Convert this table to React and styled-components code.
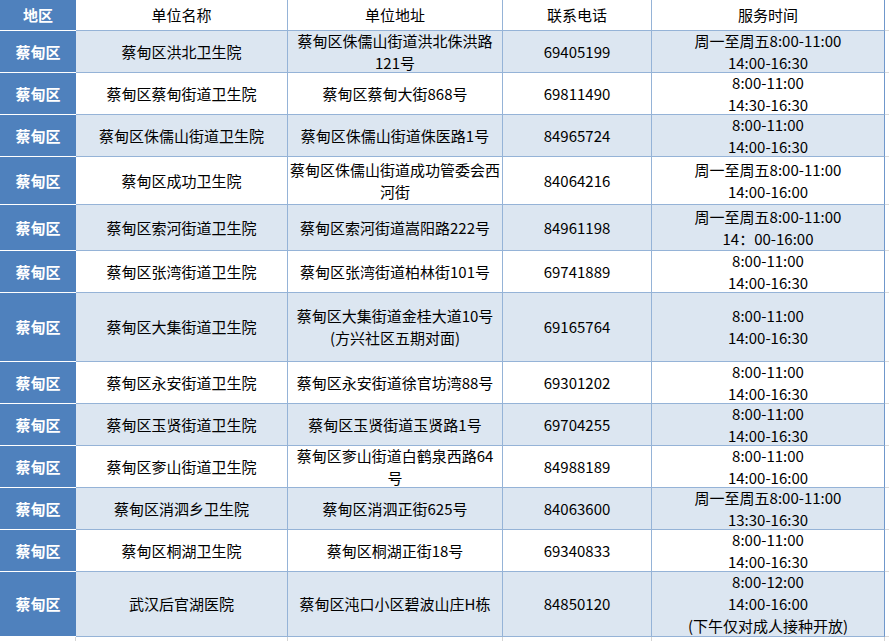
import React from 'react';
import styled, { createGlobalStyle } from 'styled-components';

const GlobalStyle = createGlobalStyle`
    html, body {
        margin: 0;
        padding: 0;
        background: #fff;
    }
    body {
        font-family: "Noto Sans CJK SC", "Noto Sans", sans-serif;
    }
`;

const columns = '76px 212px 215px 149px 233px 4px';

const rows = [
    { h: 42, name: ['蔡甸区洪北卫生院'], addr: ['蔡甸区侏儒山街道洪北侏洪路', '121号'], tel: '69405199', time: ['周一至周五8:00-11:00', '14:00-16:30'] },
    { h: 42, name: ['蔡甸区蔡甸街道卫生院'], addr: ['蔡甸区蔡甸大街868号'], tel: '69811490', time: ['8:00-11:00', '14:30-16:30'] },
    { h: 42, name: ['蔡甸区侏儒山街道卫生院'], addr: ['蔡甸区侏儒山街道侏医路1号'], tel: '84965724', time: ['8:00-11:00', '14:00-16:30'] },
    { h: 48, name: ['蔡甸区成功卫生院'], addr: ['蔡甸区侏儒山街道成功管委会西', '河街'], tel: '84064216', time: ['周一至周五8:00-11:00', '14:00-16:00'] },
    { h: 46, name: ['蔡甸区索河街道卫生院'], addr: ['蔡甸区索河街道嵩阳路222号'], tel: '84961198', time: ['周一至周五8:00-11:00', '14：00-16:00'] },
    { h: 42, name: ['蔡甸区张湾街道卫生院'], addr: ['蔡甸区张湾街道柏林街101号'], tel: '69741889', time: ['8:00-11:00', '14:00-16:30'] },
    { h: 69, name: ['蔡甸区大集街道卫生院'], addr: ['蔡甸区大集街道金桂大道10号', '(方兴社区五期对面)'], tel: '69165764', time: ['8:00-11:00', '14:00-16:30'] },
    { h: 42, name: ['蔡甸区永安街道卫生院'], addr: ['蔡甸区永安街道徐官坊湾88号'], tel: '69301202', time: ['8:00-11:00', '14:00-16:30'] },
    { h: 42, name: ['蔡甸区玉贤街道卫生院'], addr: ['蔡甸区玉贤街道玉贤路1号'], tel: '69704255', time: ['8:00-11:00', '14:00-16:30'] },
    { h: 42, name: ['蔡甸区奓山街道卫生院'], addr: ['蔡甸区奓山街道白鹤泉西路64', '号'], tel: '84988189', time: ['8:00-11:00', '14:00-16:00'] },
    { h: 42, name: ['蔡甸区消泗乡卫生院'], addr: ['蔡甸区消泗正街625号'], tel: '84063600', time: ['周一至周五8:00-11:00', '13:30-16:30'] },
    { h: 42, name: ['蔡甸区桐湖卫生院'], addr: ['蔡甸区桐湖正街18号'], tel: '69340833', time: ['8:00-11:00', '14:00-16:30'] },
    { h: 65, name: ['武汉后官湖医院'], addr: ['蔡甸区沌口小区碧波山庄H栋'], tel: '84850120', time: ['8:00-12:00', '14:00-16:00', '(下午仅对成人接种开放)'] },
];

function Lines({ items }) {
    return items.map((line, i) => <Line key={i}>{line}</Line>);
}

export default function App() {
    return (
        <>
            <GlobalStyle />
            <Sheet>
                <Row $height={31}>
                    <RegionCell>地区</RegionCell>
                    <Cell>单位名称</Cell>
                    <Cell>单位地址</Cell>
                    <Cell>联系电话</Cell>
                    <Cell $edge>服务时间</Cell>
                    <Gutter />
                </Row>
                {rows.map((r, i) => (
                    <Row key={i} $height={r.h} $shaded={i % 2 === 0}>
                        <RegionCell>蔡甸区</RegionCell>
                        <Cell><Lines items={r.name} /></Cell>
                        <Cell><Lines items={r.addr} /></Cell>
                        <Cell>{r.tel}</Cell>
                        <Cell $edge><Lines items={r.time} /></Cell>
                        <Gutter />
                    </Row>
                ))}
                <Row $height={4}>
                    <Stub />
                    <Stub />
                    <Stub />
                    <Stub />
                    <Stub />
                    <span />
                </Row>
            </Sheet>
        </>
    );
}

const Sheet = styled.div`
    width: 889px;
    display: flex;
    flex-direction: column;
`;

const Row = styled.div`
    display: grid;
    grid-template-columns: ${columns};
    height: ${(p) => p.$height}px;
    background: ${(p) => (p.$shaded ? '#dce6f1' : '#fff')};
`;

const BaseCell = styled.div`
    box-sizing: border-box;
    display: flex;
    flex-direction: column;
    align-items: center;
    justify-content: center;
    font-size: 15px;
    line-height: 22px;
    white-space: nowrap;
    overflow: hidden;
`;

const RegionCell = styled(BaseCell)`
    background: #4f81bd;
    color: #fff;
    font-weight: bold;
    border-bottom: 1px solid #fff;
`;

const Cell = styled(BaseCell)`
    color: #000;
    border-bottom: 1px solid #95b3d7;
    border-right: 1px solid ${(p) => (p.$edge ? '#6f97cb' : '#95b3d7')};
`;

const Line = styled.span`
    display: block;
`;

const Gutter = styled.div`
    background: #fff;
    border-bottom: 1px solid #dadada;
    box-sizing: border-box;
`;

const Stub = styled.div`
    border-right: 1px solid #d4d4d4;
    box-sizing: border-box;
`;
